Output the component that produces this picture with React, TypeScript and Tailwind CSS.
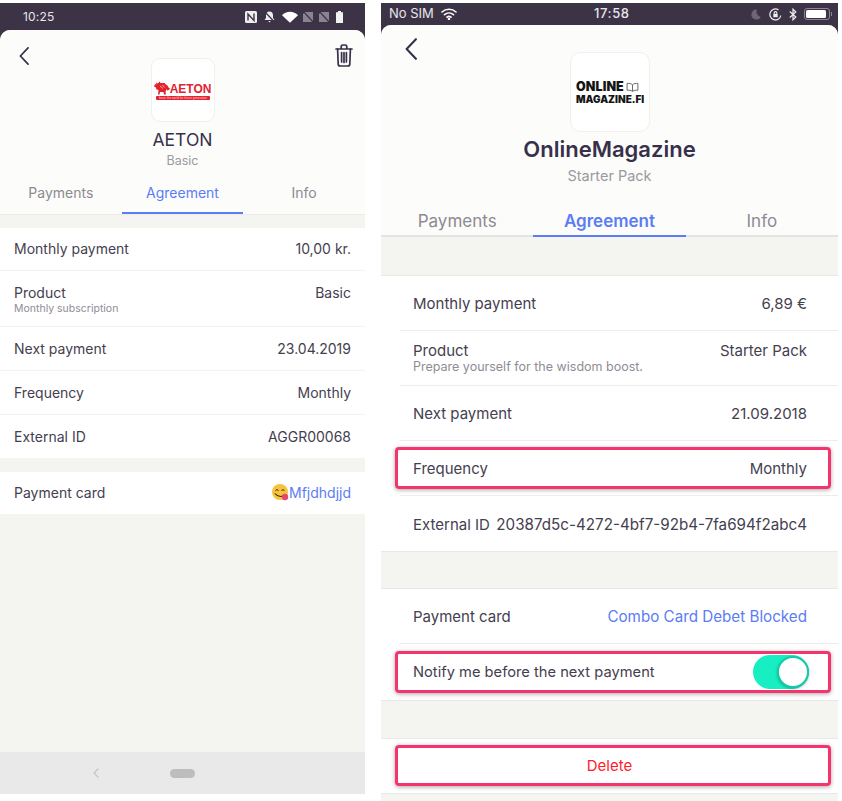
import React from "react";

const font = { fontFamily: "Inter, 'Noto Sans', sans-serif" };

function Back({ className }: { className: string }) {
  return (
    <svg className={className} viewBox="0 0 11 20" fill="none" stroke="#38304a" strokeWidth="1.9" strokeLinecap="round" strokeLinejoin="round">
      <path d="M10 1 1.5 10 10 19" />
    </svg>
  );
}

function Trash() {
  return (
    <svg className="h-[23px] w-[18px]" viewBox="0 0 18 23" fill="none" stroke="#38304a" strokeWidth="1.7" strokeLinecap="round" strokeLinejoin="round">
      <path d="M1 5h16M6.2 4.800V2.600C6.200 1.700 6.900 1 7.800 1h2.400c.9 0 1.600.7 1.600 1.600v2.200" />
      <path d="M2.600 5.200 3.200 20c0 1.200.8 2 2 2h7.600c1.200 0 2-.8 2-2l.6-14.800" />
      <path d="M6.600 8.500v9.500M9 8.500v10M11.400 8.500v9.500" />
    </svg>
  );
}

function SimOff() {
  return (
    <svg className="h-[10px] w-[10px]" viewBox="0 0 10 10">
      <path d="M2 0h8v10H0V2z" fill="#8a8490" />
      <path d="M1 0 10 10" stroke="#3c3347" strokeWidth="1.2" />
    </svg>
  );
}

function AndroidStatus() {
  return (
    <div className="flex h-[27px] items-center justify-between bg-[#3c3347] pl-[23px] pr-[22px] text-[12px] text-[#e8e6ea]">
      <span className="tracking-[0.2px]">10:25</span>
      <div className="flex items-center">
        <svg className="h-[12px] w-[12px]" viewBox="0 0 12 12">
          <rect width="12" height="12" rx="1.500" fill="#eeeeee" />
          <path d="M3 9.500V3l6 6.500V2.500" fill="none" stroke="#3c3347" strokeWidth="1.400" />
        </svg>
        <svg className="ml-[6px] h-[12px] w-[13px]" viewBox="0 0 12 12">
          <path d="M6 .5c2.200 0 3.500 1.600 3.500 3.800V7L11 9H1l1.500-2V4.300C2.500 2.100 3.800.5 6 .5zM4.800 10h2.400L6 11.500z" fill="#eeeeee" />
          <path d="M1.500 1 11 11" stroke="#3c3347" strokeWidth="1.200" />
        </svg>
        <svg className="ml-[6px] h-[12px] w-[16px]" viewBox="0 0 16 12">
          <path d="M0 4.200C2 2 5 .8 8 .8s6 1.200 8 3.400L8 11.800z" fill="#ffffff" />
        </svg>
        <span className="ml-[5px]"><SimOff /></span>
        <span className="ml-[6px]"><SimOff /></span>
        <svg className="ml-[7px] h-[12px] w-[7px]" viewBox="0 0 7 12">
          <path d="M2 0h3v1.200h2V12H0V1.200h2z" fill="#f2f2f2" />
        </svg>
      </div>
    </div>
  );
}

function IosStatus() {
  return (
    <div className="relative flex h-[22px] items-center justify-between bg-[#3c3347] pl-[8px] pr-[6px] text-[13px] text-[#e8e6ea]">
      <div className="flex items-center gap-[7px]">
        <span>No SIM</span>
        <svg className="h-[12px] w-[16px]" viewBox="0 0 16 12" fill="none" stroke="#ffffff" strokeWidth="1.600" strokeLinecap="round">
          <path d="M1 4c4-3.600 10-3.600 14 0M3.500 6.700c2.600-2.300 6.400-2.300 9 0M6 9.200c1.200-1 2.800-1 4 0" />
          <circle cx="8" cy="11" r=".5" fill="#ffffff" />
        </svg>
      </div>
      <span className="absolute left-[213px] font-medium tracking-[0.6px]">17:58</span>
      <div className="flex items-center">
        <svg className="h-[11px] w-[10px]" viewBox="0 0 10 11">
          <path d="M6 .5A5 5 0 1 0 9.800 8 5.500 5.500 0 0 1 6 .5z" fill="#6d6675" />
        </svg>
        <svg className="ml-[8px] h-[13px] w-[13px]" viewBox="0 0 13 13" fill="none" stroke="#eeeeee" strokeWidth="1.200">
          <path d="M11.800 7.500A5.500 5.500 0 1 1 9.500 1.900" />
          <rect x="4.300" y="5.800" width="4.400" height="3.400" fill="#eeeeee" stroke="none" />
          <path d="M5.200 5.800V5a1.300 1.300 0 0 1 2.600 0v.8" />
        </svg>
        <svg className="ml-[7px] h-[13px] w-[8px]" viewBox="0 0 8 13" fill="none" stroke="#eeeeee" strokeWidth="1.200">
          <path d="M.8 3.500 6.800 9 4 11.800V1.200L6.800 4 .8 9.500" />
        </svg>
        <div className="ml-[7px] flex items-center">
          <div className="h-[12px] w-[26px] rounded-[3px] border border-[#8a8490] p-[1px]">
            <div className="h-full w-[20px] rounded-[1.500px] bg-white" />
          </div>
          <div className="ml-[1px] h-[4px] w-[1px] bg-[#8a8490]" />
        </div>
      </div>
    </div>
  );
}

function AetonLogo() {
  return (
    <div className="flex h-[64px] w-[64px] flex-col items-center justify-center rounded-[9px] border border-[#f0f0ee] bg-white pt-[1px]">
      <div className="flex w-[58px] items-end justify-between">
        <svg className="h-[14px] w-[16px] shrink-0" viewBox="0 0 16 14">
          <path d="M0 5.500 1 3l1.500.5L2 1.500 4 2.500 5.500.5 6.500 2h4l2 2 1 .5 1 2 1.500 1L15 9l-2 .5-.5-1.500-1 3 .5 2.500H10L9.500 11H6l-.5 2.500H4L4.500 9 2.500 8.500 2 6.500z" fill="#e2222e" />
          <path d="M6 5l3 2.500M8.500 4l2 2.500" stroke="#ffffff" strokeWidth=".6" fill="none" />
        </svg>
        <span className="text-[12px] leading-[11px] font-bold text-[#e2222e]" style={{ fontFamily: "'Liberation Sans', sans-serif" }}>AETON</span>
      </div>
      <div className="mt-[1px] ml-[1px] h-[4px] w-[54px] overflow-hidden rounded-[1px] bg-[#e2222e] text-center text-[3px] leading-[4px] whitespace-nowrap text-[#ffd9d9]" style={{ fontFamily: "'Liberation Sans', sans-serif" }}>
        basis the world for future generation
      </div>
    </div>
  );
}

function MagazineLogo() {
  return (
    <div className="ml-[1px] flex h-[80px] w-[80px] flex-col items-start justify-center gap-[1px] rounded-[10px] border border-[#efefed] bg-white pt-[1px] pl-[5px] text-[#151515]">
      <div className="flex items-center gap-[2px]">
        <span className="text-[12.500px] leading-[12px] font-black tracking-[0.100px]">ONLINE</span>
        <svg className="h-[10px] w-[13px]" viewBox="0 0 12 9" fill="none" stroke="#555555" strokeWidth=".8">
          <path d="M6 2.500C4.500 1.200 3 1 1 1.200v6.300c2-.2 3.500 0 5 1 1.500-1 3-1.200 5-1V1.200C9 1 7.500 1.200 6 2.500zm0 0v6" />
        </svg>
      </div>
      <span className="text-[10px] leading-[10px] font-black">MAGAZINE.FI</span>
    </div>
  );
}

function Highlight({ wide }: { wide?: boolean }) {
  return (
    <div className={`pointer-events-none absolute right-[7px] left-[14px] bottom-[7px] rounded-[4px] border-[3px] border-[#f5336c] shadow-[0_1px_4px_rgba(0,0,0,0.35)] ${wide ? "top-[7px]" : "top-[6px]"}`} />
  );
}

function LeftRow({ label, sub, value, h, last }: { label: string; sub?: string; value: React.ReactNode; h: string; last?: boolean }) {
  return (
    <div className={`flex justify-between bg-white px-[14px] text-[14px] text-[#45404f] ${h} ${sub ? "items-start pt-[14px]" : "items-center"} ${last ? "" : "border-b border-[#f3f3f0]"}`}>
      <div>
        <div className="leading-[16px]">{label}</div>
        {sub && <div className="mt-[2px] text-[10.500px] leading-[12px] text-[#8f8c96]">{sub}</div>}
      </div>
      <div className="leading-[16px]">{value}</div>
    </div>
  );
}

function RightRow({ label, sub, value, last, highlight, valueClass }: { label: string; sub?: string; value: React.ReactNode; last?: boolean; highlight?: boolean; valueClass?: string }) {
  return (
    <div className="relative h-[55px] bg-white pl-[19px]">
      <div className={`flex h-full pr-[31px] pl-[13px] text-[15px] text-[#45404f] ${sub ? "items-start justify-between pt-[11px]" : "items-center justify-between pt-[2px]"} ${last ? "" : "border-b border-[#ecece9]"}`}>
        <div>
          <div className="leading-[18px]">{label}</div>
          {sub && <div className="text-[12.500px] leading-[14px] text-[#8f8c96]">{sub}</div>}
        </div>
        <div className={`leading-[18px] ${valueClass ?? ""}`}>{value}</div>
      </div>
      {highlight && <Highlight />}
    </div>
  );
}

function LeftPhone() {
  return (
    <div className="flex h-[791px] w-[365px] shrink-0 flex-col bg-[#3c3347]">
      <AndroidStatus />
      <div className="flex flex-1 flex-col overflow-hidden rounded-t-[10px] bg-[#f4f4f0]">
        <div className="border-b border-[#ebebe8] bg-[#fcfcfa]">
          <div className="grid grid-cols-[1fr_auto_1fr] pt-[28px]">
            <div className="-mt-[11px] pl-[19px]"><Back className="h-[18px] w-[10px]" /></div>
            <div className="flex flex-col items-center">
              <AetonLogo />
              <div className="mt-[6px] text-[17.500px] leading-[24px] text-[#38304a]">AETON</div>
              <div className="pt-[1px] text-[12.500px] leading-[15px] text-[#9b99a1]">Basic</div>
            </div>
            <div className="-mt-[14px] flex justify-end pr-[12px]"><Trash /></div>
          </div>
          <div className="mt-[4px] grid grid-cols-3 text-center text-[14px]">
            <div className="flex h-[42px] items-center justify-center pb-[2px] text-[#8d8a93]">Payments</div>
            <div className="flex h-[42px] items-center justify-center border-b-[2px] border-[#5b7cf5] text-[#5b7cf5]">Agreement</div>
            <div className="flex h-[42px] items-center justify-center pb-[2px] text-[#8d8a93]">Info</div>
          </div>
        </div>
        <div className="h-[13px]" />
        <LeftRow label="Monthly payment" value="10,00 kr." h="h-[43px]" />
        <LeftRow label="Product" sub="Monthly subscription" value="Basic" h="h-[56px]" />
        <LeftRow label="Next payment" value="23.04.2019" h="h-[44px]" />
        <LeftRow label="Frequency" value="Monthly" h="h-[44px]" />
        <LeftRow label="External ID" value="AGGR00068" h="h-[43px]" last />
        <div className="h-[14px]" />
        <div className="flex h-[42px] items-center justify-between bg-white px-[14px] pb-[2px] text-[14px] text-[#45404f]">
          <span>Payment card</span>
          <span className="flex items-center text-[#5b7cf5]">
            <svg className="h-[17px] w-[17px]" viewBox="0 0 17 17">
              <circle cx="8" cy="8" r="8" fill="#f6c33c" />
              <path d="M3.500 6.500q1.500-1.800 3 0M9.500 6.500q1.500-1.800 3 0" stroke="#33281a" strokeWidth="1" fill="none" />
              <path d="M2.800 9.500q5 5.500 11 1" stroke="#33281a" strokeWidth="1.100" fill="none" />
              <circle cx="13" cy="13" r="3.200" fill="#e8476f" />
            </svg>
            Mfjdhdjjd
          </span>
        </div>
        <div className="flex-1" />
        <div className="relative flex h-[42px] items-center justify-center bg-[#e9e9e9]">
          <svg className="absolute left-[93px] h-[10px] w-[6px]" viewBox="0 0 6 10" fill="none" stroke="#c4c4c4" strokeWidth="1.200">
            <path d="M5.500.5 1 5l4.500 4.500" />
          </svg>
          <div className="h-[9px] w-[25px] rounded-full bg-[#bdbdbd]" />
        </div>
      </div>
    </div>
  );
}

function RightPhone() {
  return (
    <div className="flex h-[798px] w-[457px] shrink-0 flex-col bg-[#3c3347]">
      <IosStatus />
      <div className="flex flex-1 flex-col overflow-hidden rounded-t-[10px] bg-[#f4f4f0]">
        <div className="border-b-[2px] border-[#e4e4e2] bg-[#fcfcfa]">
          <div className="grid grid-cols-[1fr_auto_1fr] pt-[27px]">
            <div className="-mt-[14px] pl-[24px]"><Back className="h-[22px] w-[12px]" /></div>
            <div className="flex flex-col items-center">
              <MagazineLogo />
              <div className="mt-[1px] text-[22px] leading-[32px] font-semibold text-[#38304a]">OnlineMagazine</div>
              <div className="mt-[1px] text-[14.500px] leading-[20px] text-[#9b99a1]">Starter Pack</div>
            </div>
            <div />
          </div>
          <div className="mt-[24px] grid grid-cols-3 text-center text-[17px] leading-[22px]">
            <div className="flex h-[25px] items-start justify-center text-[#8d8a93]">Payments</div>
            <div className="-mb-[2px] flex h-[27px] items-start justify-center border-b-[2px] border-[#5b7cf5] font-semibold text-[#5b7cf5]">Agreement</div>
            <div className="flex h-[25px] items-start justify-center text-[#8d8a93]">Info</div>
          </div>
        </div>
        <div className="h-[39px] border-b border-[#e9e9e6]" />
        <RightRow label="Monthly payment" value="6,89 €" />
        <RightRow label="Product" sub="Prepare yourself for the wisdom boost." value="Starter Pack" />
        <RightRow label="Next payment" value="21.09.2018" />
        <RightRow label="Frequency" value="Monthly" highlight />
        <RightRow label="External ID" value="20387d5c-4272-4bf7-92b4-7fa694f2abc4" valueClass="text-[15.200px]" last />
        <div className="h-[38px] border-y border-[#e9e9e6]" />
        <RightRow label="Payment card" value="Combo Card Debet Blocked" valueClass="text-[15.200px] text-[#5b7cf5]" />
        <div className="relative flex h-[56px] items-center justify-between bg-white pr-[29px] pl-[32px] text-[14.700px] text-[#45404f]">
          <span>Notify me before the next payment</span>
          <div className="flex h-[34px] w-[56px] items-center justify-end rounded-full bg-[#17efc3]">
            <div className="h-[32px] w-[32px] rounded-full border-[2px] border-[#17c9a6] bg-white shadow-[0_1px_3px_rgba(0,0,0,0.25)]" />
          </div>
          <Highlight wide />
        </div>
        <div className="h-[39px] border-y border-[#e9e9e6]" />
        <div className="relative flex h-[55px] items-center justify-center border-b border-[#e9e9e6] bg-white pt-[1px] text-[15px] text-[#ff1a2d]">
          Delete
          <Highlight />
        </div>
        <div className="flex-1" />
      </div>
    </div>
  );
}

export default function App() {
  return (
    <div className="flex h-[801px] w-[842px] gap-[16px] overflow-hidden bg-white pt-[3px]" style={font}>
      <LeftPhone />
      <RightPhone />
    </div>
  );
}
